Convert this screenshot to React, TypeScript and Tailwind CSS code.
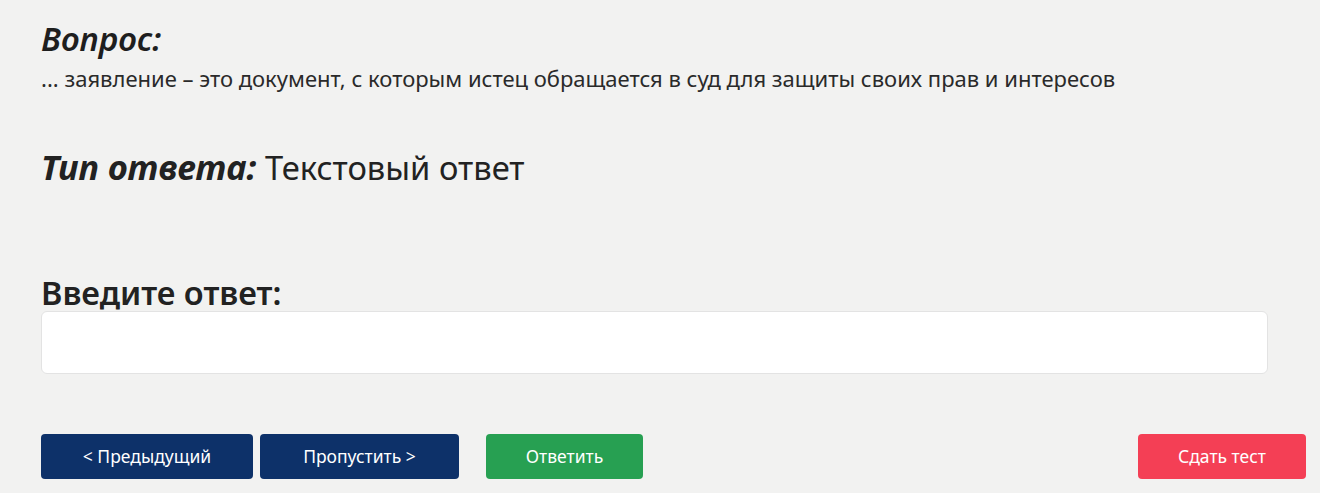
import React from "react";

export default function App() {
  return (
    <div
      className="w-[1320px] h-[493px] bg-[#f2f2f1] text-[#222222] overflow-hidden"
      style={{ fontFamily: '"Noto Sans", "Open Sans", sans-serif' }}
    >
      <div className="pl-[41px] pr-[14px] pt-[19px]">
        <div className="text-[33px] leading-[40px] font-semibold italic text-[#1e1e1e]">Вопрос:</div>
        <div className="text-[22px] leading-[24px] text-[#2a2a2a] mt-[7px]">
          ... заявление – это документ, с которым истец обращается в суд для защиты своих прав и интересов
        </div>
        <div className="mt-[57px] leading-[40px] text-[#222]">
          <span className="font-bold italic text-[34.5px]">Тип ответа:</span>
          <span className="font-normal text-[32.7px]"> Текстовый ответ</span>
        </div>
        <div className="mt-[81px] text-[32.5px] leading-[36px] font-semibold text-[#222]">Введите ответ:</div>
        <div className="w-[1227px] h-[63px] bg-white rounded-[6px] border border-[#e3e3e3]"></div>
        <div className="mt-[60px] flex items-center">
          <button className="w-[212px] h-[45px] rounded-[4px] bg-[#0d3169] text-white text-[17.5px]">&lt; Предыдущий</button>
          <button className="ml-[7px] w-[199px] h-[45px] rounded-[4px] bg-[#0d3169] text-white text-[17.5px]">Пропустить &gt;</button>
          <button className="ml-[27px] w-[157px] h-[45px] rounded-[4px] bg-[#27a052] text-white text-[17.5px]">Ответить</button>
          <div className="flex-1"></div>
          <button className="w-[168px] h-[45px] rounded-[4px] bg-[#f43f55] text-white text-[17.5px]">Сдать тест</button>
        </div>
      </div>
    </div>
  );
}
